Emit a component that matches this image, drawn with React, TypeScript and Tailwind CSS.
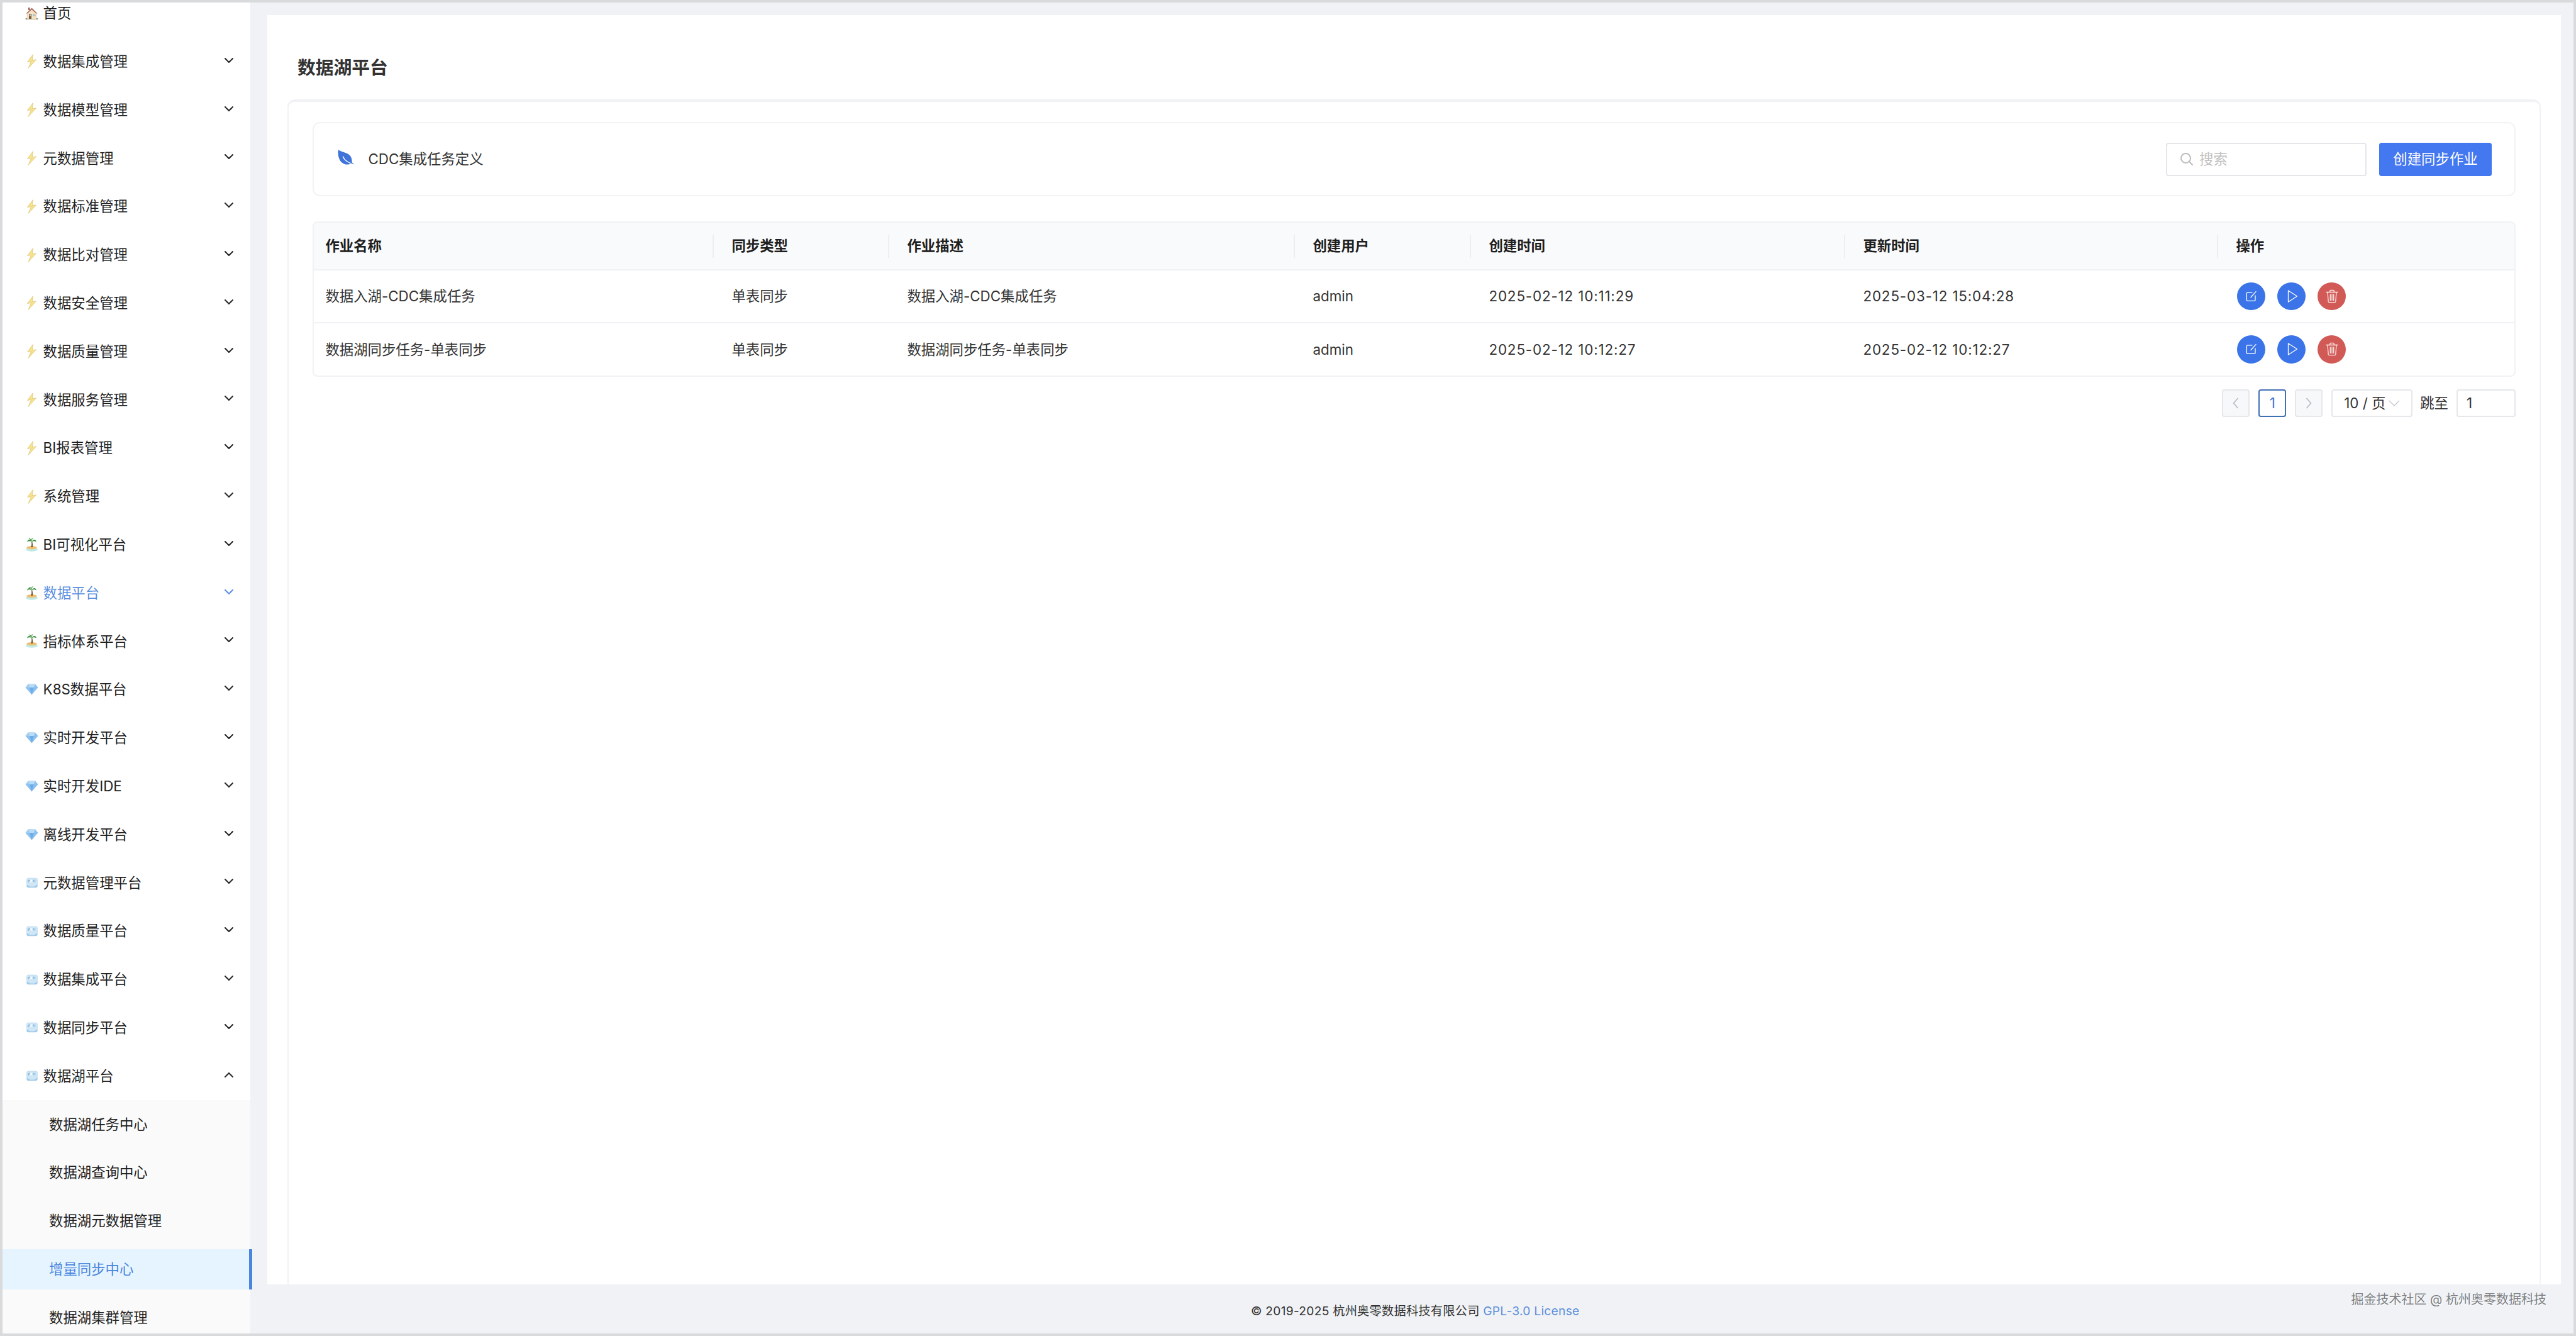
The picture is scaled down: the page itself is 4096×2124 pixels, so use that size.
import React from "react";

const Chevron = ({ up = false, blue = false }: { up?: boolean; blue?: boolean }) => (
  <svg width="14" height="8" viewBox="0 0 14 8" fill="none" className={`ml-auto -mt-[4px] shrink-0 ${up ? "rotate-180" : ""}`}>
    <path d="M1 1L7 7L13 1" stroke={blue ? "#5b8fe0" : "#262626"} strokeWidth="2" strokeLinecap="round" strokeLinejoin="round" />
  </svg>
);

const House = () => (
  <svg width="21" height="21" viewBox="0 0 21 21">
    <path d="M3 9.5L10.5 3L18 9.5V19H3Z" fill="#f3e3c4" stroke="#d8c39c" strokeWidth=".5" />
    <path d="M1.5 10.5L10.5 1.5L19.5 10.5L17.6 10.5L10.5 4.2L3.4 10.5Z" fill="#a9655a" />
    <rect x="5" y="1" width="2.4" height="4" fill="#9c5a50" />
    <rect x="6" y="11" width="4" height="8" fill="#7b5a45" />
    <rect x="7" y="12" width="2" height="2.2" fill="#cdd8d8" />
    <rect x="12" y="11.5" width="4.5" height="3.4" fill="#b4c0c6" />
    <ellipse cx="2" cy="19" rx="1.6" ry="1.1" fill="#7e8a6a" />
    <ellipse cx="19" cy="19" rx="1.6" ry="1.1" fill="#7e8a6a" />
    <rect x="3" y="19" width="15" height="1" fill="#bdb7a0" />
  </svg>
);

const Bolt = () => (
  <svg width="21" height="23" viewBox="0 0 21 23">
    <path d="M12.5 0.5L3.5 12.5L9.5 11.5L5 22.5L17.5 8.8L11.3 9.8Z" fill="#f7e38a" stroke="#dcc67f" strokeWidth=".8" strokeLinejoin="round" />
  </svg>
);

const Island = () => (
  <svg width="21" height="22" viewBox="0 0 21 22">
    <ellipse cx="10.5" cy="18.5" rx="9.5" ry="3.3" fill="#bfeae6" />
    <ellipse cx="10.5" cy="15.7" rx="8.2" ry="2.7" fill="#efbf72" />
    <path d="M10 6C10.5 9 10.3 12 9 15H12C12.3 12 12 9 11.2 6Z" fill="#6f5b3b" />
    <path d="M10.5 6C8 2 4.500 2 3 6.500C6 4.700 8 5 10.500 6Z" fill="#2f8f35" />
    <path d="M10.5 6C13 2 16.500 2 18 6.500C15 4.700 13 5 10.500 6Z" fill="#2f8f35" />
    <path d="M10.5 6C8.500 1.500 11 0 13 .5C10.800 2 10.500 4 10.500 6Z" fill="#46a044" />
    <path d="M10.5 6C9 .8 6.600 .8 5.500 1.300C8 2.500 9.500 4 10.500 6Z" fill="#287a2e" />
  </svg>
);

const Diamond = () => (
  <svg width="21" height="18" viewBox="0 0 21 18">
    <path d="M5 .5H16L20.5 6L10.5 17.5L.5 6Z" fill="#8cc1ef" />
    <path d="M5 .5L7.3 6H13.7L16 .5Z" fill="#b9dcf7" />
    <path d="M7.3 6L10.5 17.5L13.7 6Z" fill="#6cabe6" />
    <path d="M.5 6H7.3L5 .5Z" fill="#a3cff3" />
  </svg>
);

const Ice = () => (
  <svg width="18" height="17" viewBox="0 0 18 17">
    <rect x=".5" y="1" width="17" height="15" rx="2.5" fill="#cfe6f6" stroke="#b5d6ec" strokeWidth=".6" />
    <path d="M.8 11.5L6 14.5H12L17.2 11.5V14C17.2 15.2 16 16 15 16H3C2 16 .8 15.2 .8 14Z" fill="#a3cbe7" />
    <path d="M3 4V8M5 3.6V6M11 3.6V7M13.6 3.6V7.6" stroke="#5f9cc9" strokeWidth="1" />
    <path d="M6.4 3.6H9.4V7.4H6.4Z" fill="#f3fafe" />
  </svg>
);

const icons = { house: House, bolt: Bolt, island: Island, diamond: Diamond, ice: Ice };
type IconName = keyof typeof icons;

const groups: { label: string; icon: IconName; active?: boolean; open?: boolean; plain?: boolean }[] = [
  { label: "首页", icon: "house", plain: true },
  { label: "数据集成管理", icon: "bolt" },
  { label: "数据模型管理", icon: "bolt" },
  { label: "元数据管理", icon: "bolt" },
  { label: "数据标准管理", icon: "bolt" },
  { label: "数据比对管理", icon: "bolt" },
  { label: "数据安全管理", icon: "bolt" },
  { label: "数据质量管理", icon: "bolt" },
  { label: "数据服务管理", icon: "bolt" },
  { label: "BI报表管理", icon: "bolt" },
  { label: "系统管理", icon: "bolt" },
  { label: "BI可视化平台", icon: "island" },
  { label: "数据平台", icon: "island", active: true },
  { label: "指标体系平台", icon: "island" },
  { label: "K8S数据平台", icon: "diamond" },
  { label: "实时开发平台", icon: "diamond" },
  { label: "实时开发IDE", icon: "diamond" },
  { label: "离线开发平台", icon: "diamond" },
  { label: "元数据管理平台", icon: "ice" },
  { label: "数据质量平台", icon: "ice" },
  { label: "数据集成平台", icon: "ice" },
  { label: "数据同步平台", icon: "ice" },
  { label: "数据湖平台", icon: "ice", open: true },
];

const subItems = ["数据湖任务中心", "数据湖查询中心", "数据湖元数据管理", "增量同步中心", "数据湖集群管理"];

const rows = [
  ["数据入湖-CDC集成任务", "单表同步", "数据入湖-CDC集成任务", "admin", "2025-02-12 10:11:29", "2025-03-12 15:04:28"],
  ["数据湖同步任务-单表同步", "单表同步", "数据湖同步任务-单表同步", "admin", "2025-02-12 10:12:27", "2025-02-12 10:12:27"],
];

const heads = ["作业名称", "同步类型", "作业描述", "创建用户", "创建时间", "更新时间", "操作"];
const gridCols = "grid grid-cols-[634px_279px_645px_280px_595px_593px_1fr]";

const EditIcon = () => (
  <svg width="20" height="20" viewBox="0 0 20 20" fill="none" stroke="#fff" strokeWidth="1.3" strokeLinecap="round" strokeLinejoin="round">
    <path d="M11 3.8H3.8C3 3.8 2.4 4.4 2.4 5.2V16C2.4 16.8 3 17.4 3.8 17.4H14.6C15.4 17.4 16 16.8 16 16V9" />
    <path d="M9 11.5L17 2.6" />
  </svg>
);
const PlayIcon = () => (
  <svg width="20" height="22" viewBox="0 0 20 22" fill="none" stroke="#fff" strokeWidth="1.3" strokeLinejoin="round">
    <path d="M3.5 2L17.5 11L3.5 20Z" />
  </svg>
);
const TrashIcon = () => (
  <svg width="20" height="22" viewBox="0 0 20 22" fill="none" stroke="#fbe9e7" strokeWidth="1.3" strokeLinecap="round" strokeLinejoin="round">
    <path d="M1 4.5H19" />
    <path d="M6.8 4.5V2.4C6.8 1.8 7.2 1.4 7.8 1.4H12.2C12.8 1.4 13.2 1.8 13.2 2.4V4.5" />
    <path d="M3 4.5L4.2 19.4C4.3 20.2 4.8 20.6 5.5 20.6H14.5C15.2 20.6 15.7 20.2 15.8 19.4L17 4.5" />
    <path d="M7.3 8V17.4M10 8V17.4M12.7 8V17.4" />
  </svg>
);

function Leaf() {
  return (
    <svg width="27" height="25" viewBox="0 0 27 25" className="-mt-[6px]">
      <path d="M1 0C4 3 10 3.500 15 6C21 9 23 14 22.500 20L26.500 23.500L21.500 21.500C18 24.500 11 24.500 6 20C2 16.500 -.5 8 1 0Z" fill="#3f74d8" />
      <path d="M8.500 11C10 15.500 14 19 20 21.300" stroke="#fff" strokeWidth="1.400" fill="none" strokeLinecap="round" />
    </svg>
  );
}

export default function App() {
  return (
    <div className="flex h-[2124px] w-[4096px] overflow-hidden bg-[#d9dadc] p-1 text-[22.4px] text-[#1f1f1f] [font-family:'Inter','Noto_Sans_CJK_SC',sans-serif]">
      <aside className="relative z-10 h-full w-[394.4px] shrink-0 bg-white [clip-path:inset(0_-10px_0_0)]">
        <nav className="-mt-[21.3px]">
          {groups.map((g) => {
            const Icon = icons[g.icon];
            return (
              <div key={g.label} className={`flex h-[76.8px] items-center pl-9 pr-[27.4px] ${g.active ? "text-[#5b8fe0]" : ""}`}>
                <span className="flex w-[21px] shrink-0 justify-center">
                  <Icon />
                </span>
                <span className="ml-[7.6px]">{g.label}</span>
                {!g.plain && <Chevron up={g.open} blue={g.active} />}
              </div>
            );
          })}
          <div className="bg-[#fafafa]">
            {subItems.map((s) => {
              const sel = s === "增量同步中心";
              return (
                <div key={s} className="flex h-[76.8px] items-center">
                  <div className={`relative flex h-[64px] w-full items-center pl-[74px] ${sel ? "bg-[#e6f4ff] text-[#4a86e0]" : ""}`}>
                    {s}
                    {sel && <span className="absolute bottom-0 right-[-2.4px] top-0 w-[4.8px] bg-[#4a86e0]" />}
                  </div>
                </div>
              );
            })}
          </div>
        </nav>
      </aside>

      <main className="flex min-w-0 flex-1 flex-col bg-[#f0f2f5]">
        <div className="min-h-0 flex-1 pl-[27px] pr-5 pt-5">
          <div className="h-full overflow-hidden bg-white">
            <div className="h-[134px] pl-[47.5px] pt-[56px] text-[28.8px] font-semibold leading-[56px] text-[#333]">数据湖平台</div>
            <div className="mx-8 h-[2000px] rounded-xl border-2 border-t-4 border-[#f0f2f5] pl-[38px] pr-[38px] pt-[32px]">
              <div className="flex h-[118px] items-center rounded-xl border-2 border-[#f2f3f5] pl-[38px] pr-[36px]">
                <Leaf />
                <span className="ml-[21px] text-[#333]">CDC集成任务定义</span>
                <div className="ml-auto flex h-[53px] w-[319px] items-center rounded-[4px] border-2 border-[#e4e6e9] pl-[20px] text-[#bfbfbf]">
                  <svg width="22" height="22" viewBox="0 0 22 22" fill="none" stroke="#bdbdbd" strokeWidth="2" strokeLinecap="round">
                    <circle cx="9.500" cy="9.500" r="7.500" />
                    <path d="M15 15L20 20" />
                  </svg>
                  <span className="ml-[9px]">搜索</span>
                </div>
                <button className="ml-5 flex h-[53px] w-[179px] items-center justify-center rounded-[4px] bg-[#4478f0] text-white">创建同步作业</button>
              </div>

              <div className="mt-10 rounded-lg border-2 border-[#f0f2f5] text-[#333]">
                <div className={`${gridCols} h-[76px] items-center rounded-t-lg border-b-2 border-[#f0f2f5] bg-[#f9fafb]`}>
                  {heads.map((h, i) => (
                    <div key={h} className={`flex items-center font-semibold text-[#1f1f1f] ${i === 0 ? "pl-[18px]" : ""}`}>
                      {i > 0 && <span className="mr-[28px] h-[37px] w-[2px] bg-[#eceef0]" />}
                      {h}
                    </div>
                  ))}
                </div>
                {rows.map((r, ri) => (
                  <div key={ri} className={`${gridCols} items-center ${ri === 0 ? "h-[84px] border-b-2 border-[#f0f2f5]" : "h-[83px]"}`}>
                    {r.map((c, i) => (
                      <div key={i} className={`${i === 0 ? "pl-[18px]" : "pl-[30px]"} ${i >= 4 ? "tracking-[0.85px]" : ""}`}>
                        {c}
                      </div>
                    ))}
                    <div className="flex gap-[19.2px] pl-[32px]">
                      <span className="flex h-[44.8px] w-[44.8px] items-center justify-center rounded-full bg-[#3b74e8]"><EditIcon /></span>
                      <span className="flex h-[44.8px] w-[44.8px] items-center justify-center rounded-full bg-[#3b74e8] pl-[2px]"><PlayIcon /></span>
                      <span className="flex h-[44.8px] w-[44.8px] items-center justify-center rounded-full bg-[#d25a56]"><TrashIcon /></span>
                    </div>
                  </div>
                ))}
              </div>

              <div className="mt-5 flex h-11 items-center justify-end text-[#333]">
                <span className="flex h-11 w-11 items-center justify-center rounded-[4px] border-2 border-[#e5e7eb] bg-[#f7f8fa]">
                  <svg width="10" height="20" viewBox="0 0 10 20" fill="none" stroke="#b4b8bf" strokeWidth="1.500"><path d="M8.500 2L1.500 10L8.500 18" /></svg>
                </span>
                <span className="ml-[14px] flex h-11 w-11 items-center justify-center rounded-[4px] border-2 border-[#3f6fb5] text-[#3f74d8]">1</span>
                <span className="ml-[14px] flex h-11 w-11 items-center justify-center rounded-[4px] border-2 border-[#e5e7eb] bg-[#f7f8fa]">
                  <svg width="10" height="20" viewBox="0 0 10 20" fill="none" stroke="#b4b8bf" strokeWidth="1.500"><path d="M1.500 2L8.500 10L1.500 18" /></svg>
                </span>
                <span className="ml-[14px] flex h-11 w-[129px] items-center rounded-[4px] border-2 border-[#e5e7eb] pl-[18px]">
                  10 / 页
                  <svg width="18" height="10" viewBox="0 0 18 10" fill="none" stroke="#c4c7cc" strokeWidth="1.300" className="ml-[4px]"><path d="M1 1L9 9L17 1" /></svg>
                </span>
                <span className="ml-[12px]">跳至</span>
                <span className="ml-[13px] flex h-11 w-[94px] items-center rounded-[4px] border-2 border-[#e5e7eb] pl-[14px]">1</span>
              </div>
            </div>
          </div>
        </div>

        <footer className="relative flex h-[78px] shrink-0 items-center justify-center pl-[10px] pt-[6px] text-[19.2px] tracking-[0.26px] text-[#333]">
          <span>
            © 2019-2025 杭州奥零数据科技有限公司 <span className="text-[#5b8fdc]">GPL-3.0 License</span>
          </span>
          <span className="absolute right-[43px] top-[9px] text-[20px] tracking-normal text-[#7d7f83] [text-shadow:1px_1px_0_#fff]">掘金技术社区 @ 杭州奥零数据科技</span>
        </footer>
      </main>
    </div>
  );
}
